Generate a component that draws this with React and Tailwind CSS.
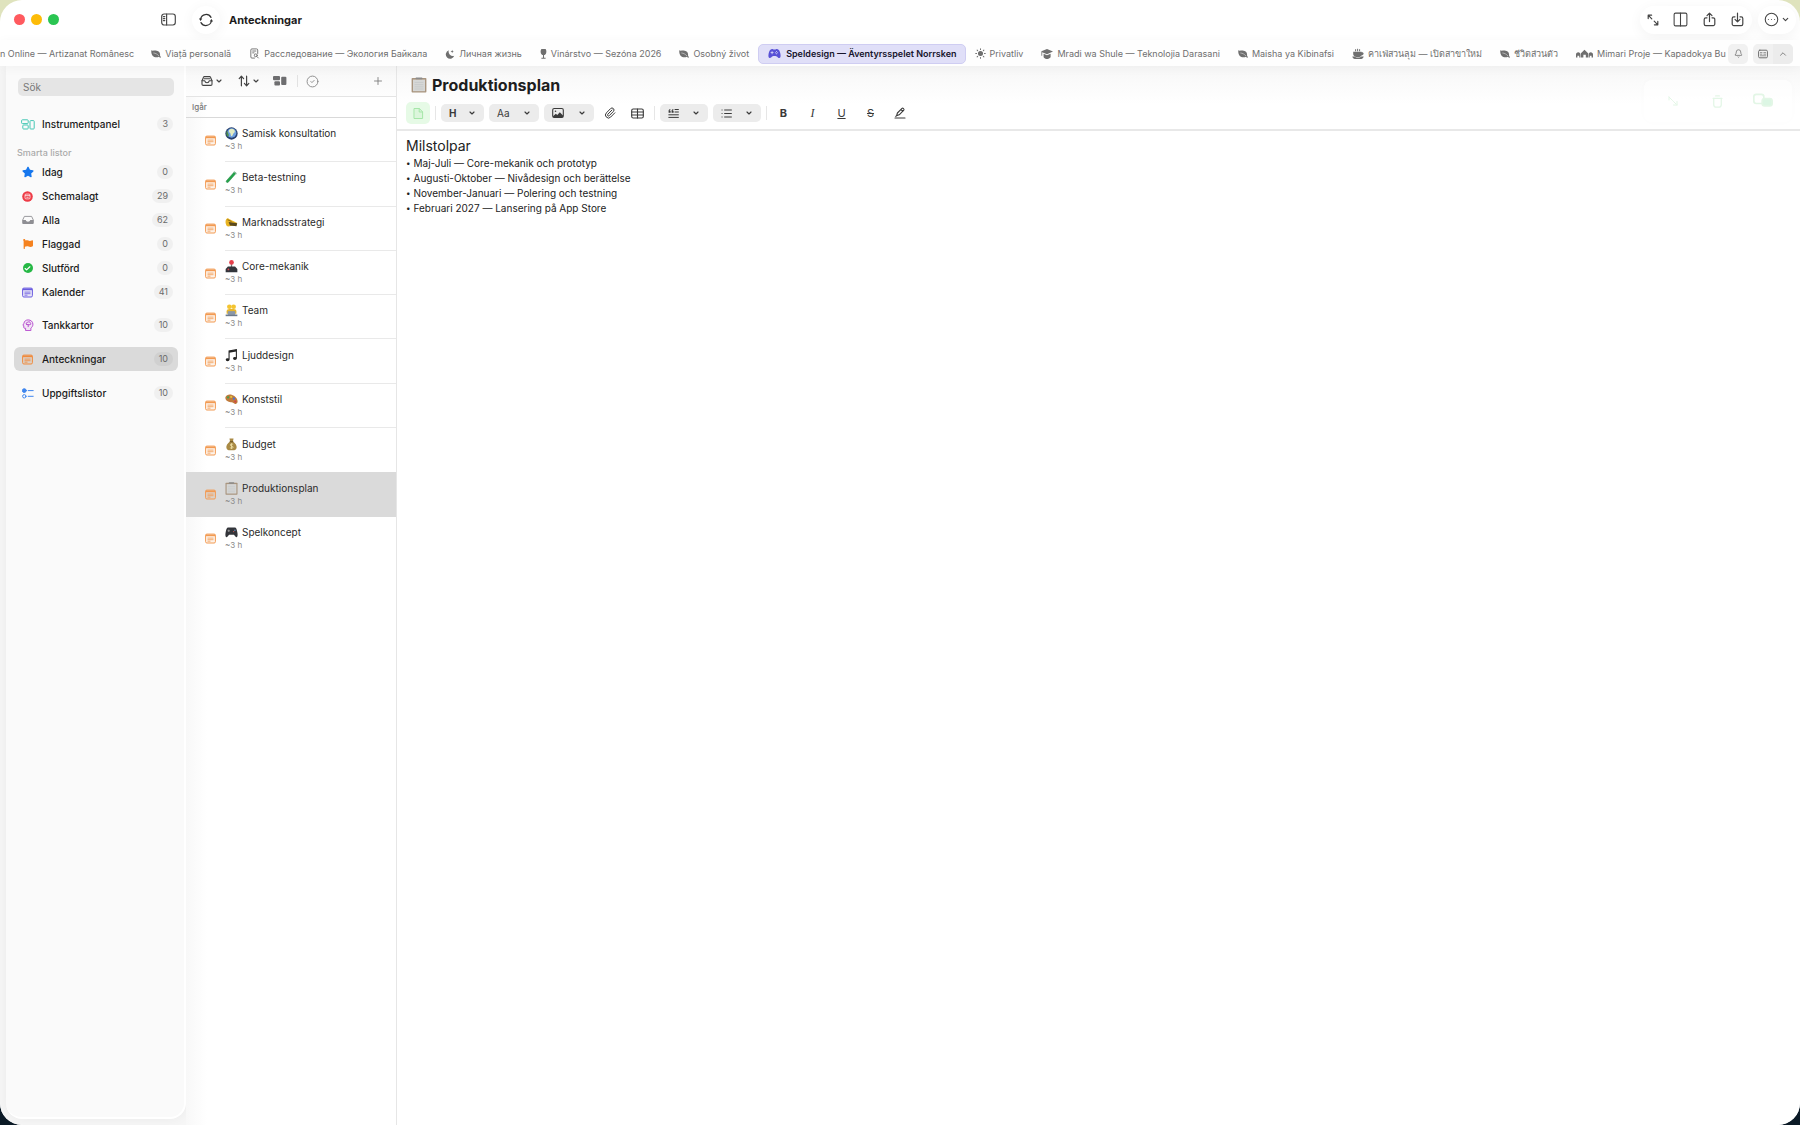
import React from 'react';
import { Bell, Check, ChevronDown, ChevronUp, CircleCheck, CircleEllipsis, Columns2, Paperclip, Plus } from 'lucide-react';
import { FaFlag, FaStar } from 'react-icons/fa';
import { IoGameController } from 'react-icons/io5';

/* ---------- icons ---------- */

const Svg = ({ size = 12, w, children, className = '', ...rest }) => (
  <svg width={w || size} height={size} viewBox="0 0 24 24" fill="none" stroke="currentColor" strokeWidth="2" strokeLinecap="round" strokeLinejoin="round" className={`shrink-0 ${className}`} aria-hidden="true" {...rest}>
    {children}
  </svg>
);

const PanelIcon = () => (
  <Svg size={15} viewBox="0 0 15 15" strokeWidth="1.2">
    <rect x="0.7" y="2" width="13.6" height="11" rx="2.4" />
    <path d="M5.6 2v11M2.4 4.6h1.4M2.4 6.6h1.4M2.4 8.6h1.4" />
  </Svg>
);

const SyncIcon = () => (
  <Svg size={16} viewBox="0 0 16 16" strokeWidth="1.2">
    <path d="M2.6 7A5.6 5.6 0 0 1 13 5.4M13.4 9A5.6 5.6 0 0 1 3 10.6" />
    <path d="M0.9 6.6h3.4L2.6 9zM15.1 9.4h-3.4L13.4 7z" fill="currentColor" stroke="none" />
  </Svg>
);

const ExpandIcon = () => (
  <Svg size={12} viewBox="0 0 12 12" strokeWidth="1.2">
    <path d="M1.2 4.6V1.2h3.4M1.4 1.4l3.4 3.4M10.8 7.4v3.4H7.4M10.6 10.6 7.2 7.2" />
  </Svg>
);

const ShareIcon = () => (
  <Svg size={15} viewBox="0 0 15 15" strokeWidth="1.2">
    <path d="M5 5.8H3.8A1.6 1.6 0 0 0 2.2 7.4V12a1.6 1.6 0 0 0 1.6 1.6h7.4a1.6 1.6 0 0 0 1.6-1.6V7.4a1.6 1.6 0 0 0-1.6-1.6H10M7.5 9.6V1.2M5 3.6l2.5-2.5L10 3.6" />
  </Svg>
);

const SaveIcon = () => (
  <Svg size={15} viewBox="0 0 15 15" strokeWidth="1.2">
    <path d="M5 4.8H3.8a1.6 1.6 0 0 0-1.6 1.6V12a1.6 1.6 0 0 0 1.6 1.6h7.4a1.6 1.6 0 0 0 1.6-1.6V6.4a1.6 1.6 0 0 0-1.6-1.6H10M7.5 1.2v8.6M5 7.4l2.5 2.5L10 7.4" />
  </Svg>
);

const LeafIcon = () => (
  <Svg size={10} viewBox="0 0 11 10" stroke="none" fill="currentColor">
    <path d="M.3 1c1.500.7 3 0 4.900.1 3.600.2 5.200 2.500 4.700 5.600l.9 1.700c.3.600-.5 1.100-.9.600L8.800 7.900C5 9.900-.2 8 .3 1z" />
    <path d="M3 3.900c2.200.2 4 1.300 5.600 3.100" fill="none" stroke="#fff" strokeWidth=".5" />
  </Svg>
);

const DocSearchIcon = () => (
  <Svg size={11} viewBox="0 0 12 12" strokeWidth="1">
    <path d="M9.5 6V2.2A1.2 1.2 0 0 0 8.3 1H3.2A1.2 1.2 0 0 0 2 2.2v7.6A1.2 1.2 0 0 0 3.2 11H6M4 3.3h3.5M4 5.3h1.5" />
    <circle cx="7.4" cy="8" r="1.6" />
    <path d="m8.7 9.4 1.5 1.5" />
  </Svg>
);

const MoonIcon = () => (
  <Svg size={10} viewBox="0 0 12 12" stroke="none" fill="currentColor">
    <path d="M4.6 1.6a5.2 5.2 0 1 0 6.5 6.6A5.2 5.2 0 0 1 4.6 1.6z" />
    <path d="m8.6 1 .5 1.5 1.5.5-1.5.5L8.600 5l-.5-1.500L6.600 3l1.500-.5z" />
  </Svg>
);

const WineIcon = () => (
  <Svg size={12} w={7} viewBox="0 0 8 12" stroke="none" fill="currentColor">
    <path d="M1.6.4h4.8C7.400 2 7.500 3.400 7 5 6.500 6.300 5.700 6.900 4.600 7.100v3.200h1.800v1.200H1.600v-1.200h1.800V7.100C2.300 6.900 1.500 6.300 1 5 .5 3.400.6 2 1.600.4z" />
  </Svg>
);

const SunIcon = () => (
  <Svg size={11} viewBox="0 0 12 12" strokeWidth="1.1">
    <circle cx="6" cy="6" r="2.2" fill="currentColor" />
    <path d="M6 .8v.9M6 10.3v.9M.8 6h.9M10.3 6h.9M2.3 2.3l.6.6M9.1 9.1l.6.6M9.7 2.3l-.6.6M2.9 9.1l-.6.6" />
  </Svg>
);

const CapIcon = () => (
  <Svg size={12} viewBox="0 0 12 12" stroke="none" fill="currentColor">
    <path d="M6 1 12 3.6 6 6.2 1.2 4.2v3.6H.4V3.3z" />
    <path d="M2.6 5.8 6 7.3l3.6-1.5v3.4C8.6 10.4 7.4 11 6 11s-2.6-.6-3.4-1.8z" />
  </Svg>
);

const CafeIcon = () => (
  <Svg size={12} viewBox="0 0 12 12" stroke="none" fill="currentColor">
    <path d="M1.200 3.800h8.400v.4c1.200-.2 2 .4 2 1.400s-.9 1.900-2.200 1.900C9 8.400 8.400 8.800 7.400 9H4C2.200 8.600 1.200 7.400 1.200 6z" />
    <path d="M.3 8.600h2.500c.6.6 1.200.8 2 .8h2.400c.8 0 1.400-.2 2-.8h2.500c-.3 1.600-1.300 2.400-2.500 2.400H2.800C1.600 11 .6 10.200.3 8.600z" />
    <path d="M3.600 1.600v1.300M5.600 1.200v1.700M7.600 1.600v1.300" stroke="currentColor" strokeWidth="1" />
  </Svg>
);

const HousesIcon = () => (
  <Svg size={11} w={17} viewBox="0 0 18 11" stroke="none" fill="currentColor">
    <path fillRule="evenodd" d="M5.2 5.3 9 1.6l3.8 3.7v4.5h-2.4V6.8H7.8v3H5.2z" />
    <path fillRule="evenodd" d="M0 6.6c0-1.4 1-2.4 2.4-2.4s2.3 1 2.3 2.4v3.2H3.4V8H1.5v1.8H0zM13.3 6.6c0-1.4 1-2.4 2.3-2.4S18 5.2 18 6.6v3.2h-1.5V8h-1.9v1.8h-1.3z" />
  </Svg>
);

const NewsIcon = () => (
  <Svg size={10} viewBox="0 0 10 10" strokeWidth="1">
    <rect x=".6" y="1.2" width="8.8" height="7.6" rx="1.2" />
    <path d="M2.4 3.6h1.600M2.400 5.200h1.600M5.800 3.600h1.800M5.800 5.200h1.800M2.400 6.800h5.200" strokeWidth=".7" />
  </Svg>
);

const NoteIcon = ({ color = '#f08a3c', size = 11 }) => (
  <svg width={size} height={size} viewBox="0 0 11 11" className="shrink-0" aria-hidden="true">
    <rect x=".6" y="1.1" width="9.8" height="8.9" rx="1.3" fill={color} fillOpacity=".12" stroke={color} strokeWidth="1" />
    <path d="M.6 1.6h9.8v1.6H.6z" fill={color} />
    <path d="M2.5 5.1h6M2.5 6.7h6M2.5 8.2h3" stroke={color} strokeWidth=".8" />
  </svg>
);

const BoardsIcon = ({ color }) => (
  <svg width="14" height="11" viewBox="0 0 14 11" fill="none" stroke={color} strokeWidth="1" className="shrink-0" aria-hidden="true">
    <rect x=".6" y=".8" width="6.6" height="3.8" rx=".8" />
    <rect x="1.8" y="6" width="5.4" height="4" rx=".8" />
    <rect x="9" y="1.6" width="4.2" height="8.4" rx=".8" />
  </svg>
);

const CalCircleIcon = () => (
  <svg width="11" height="11" viewBox="0 0 11 11" className="shrink-0" aria-hidden="true">
    <circle cx="5.5" cy="5.5" r="5.3" fill="#ee3b46" />
    <rect x="3" y="3.1" width="5" height="4.8" rx="1" fill="none" stroke="#fff" strokeWidth=".7" />
    <path d="M3 4.6h5M4.4 6.3h2.2" stroke="#fff" strokeWidth=".7" />
  </svg>
);

const TrayIcon = () => (
  <svg width="12" height="10" viewBox="0 0 12 10" className="shrink-0" aria-hidden="true">
    <path d="M.6 5.2 2.4 1.4h7.2l1.8 3.8" fill="none" stroke="#8e8e93" strokeWidth=".9" />
    <path d="M.2 5h3.6c.2 1.2 1 1.7 2.2 1.7S8 6.2 8.2 5h3.6v2.8c0 .8-.5 1.3-1.3 1.3h-9C.7 9.1.2 8.6.2 7.8z" fill="#8e8e93" />
  </svg>
);

const DoneIcon = () => (
  <span className="flex size-[10px] items-center justify-center rounded-full bg-[#25b845] text-white">
    <Check size={7} strokeWidth={4} />
  </span>
);

const MindIcon = () => (
  <svg width="12" height="12" viewBox="0 0 12 12" fill="none" stroke="#b84fd0" strokeWidth="1" strokeLinecap="round" className="shrink-0" aria-hidden="true">
    <path d="M3.6 11.2V9.3H2.6c-.6 0-.8-.4-.8-1V6.8L.9 6.2l1-1.8C2.2 2.2 3.9.9 6.2.9c2.7 0 4.7 1.8 4.7 4.3 0 2-1 3-2 3.9v2.1z" fill="#b84fd0" fillOpacity=".12" />
    <path d="M4.2 4.6c0-1 .8-1.5 1.7-1.3.6-.9 2.3-.6 2.3.6.9.4.7 1.8-.3 1.8H6.2v2M6.2 5.6 4.4 5.4" />
  </svg>
);

const TasksIcon = () => (
  <svg width="12" height="11" viewBox="0 0 12 11" fill="none" stroke="#3f86ee" strokeWidth="1" strokeLinecap="round" className="shrink-0" aria-hidden="true">
    <circle cx="2.3" cy="2.6" r="1.9" fill="#3f86ee" />
    <circle cx="2.3" cy="8.3" r="1.7" />
    <path d="M6.2 2.6h5M6.2 8.3h5" />
  </svg>
);

const DocIcon = () => (
  <Svg size={13} viewBox="0 0 13 13" strokeWidth="1">
    <path d="M2.4 1.5h5l3.2 3.4v6.6H2.4z" fill="currentColor" fillOpacity=".15" />
    <path d="M7.2 1.6V5h3.3" />
  </Svg>
);

const PictureIcon = () => (
  <Svg size={12} viewBox="0 0 12 12" strokeWidth="1.1">
    <rect x=".7" y="1.5" width="10.6" height="9" rx="1.5" />
    <circle cx="3.5" cy="4.3" r=".8" fill="currentColor" stroke="none" />
    <path d="M1 9.2 3.8 6.8l1.5 1.3 2.5-2.9L11 8.6v1.6H1z" fill="currentColor" stroke="none" />
  </Svg>
);

const TableIcon = () => (
  <Svg size={13} viewBox="0 0 13 13" strokeWidth="1.1">
    <rect x=".7" y="2" width="11.6" height="9" rx="1.5" />
    <path d="M.7 5h11.6M.7 8h11.6M6.5 2v9" />
  </Svg>
);

const QuoteIcon = () => (
  <Svg size={11} viewBox="0 0 11 11" strokeWidth="1">
    <path d="M7 1.5h3.4M7 4h3.4M.8 6.8h9.6M.8 9.4h9.6" />
    <path d="M.6 4.8V3C.6 1.8 1.2 1.1 2.4.9v.9c-.5.1-.7.4-.7.9h.9v2.1zM3.6 4.8V3c0-1.2.6-1.9 1.8-2.1v.9c-.5.1-.7.4-.7.9h.9v2.1z" fill="currentColor" stroke="none" />
  </Svg>
);

const BulletsIcon = () => (
  <Svg size={11} viewBox="0 0 11 11" strokeWidth="1">
    <path d="M3.6 2h6.8M3.6 5.5h6.8M3.6 9h6.8M1 2h.1M1 5.5h.1M1 9h.1" />
  </Svg>
);

const MarkerIcon = () => (
  <Svg size={12} viewBox="0 0 12 12" strokeWidth="1.1">
    <path d="M2.6 8.6 3.4 6 8 1.4c.8-.8 2.6.8 1.8 1.7L5.2 7.8zM7 2.6l1.8 1.7M1 11h10M2.6 8.6l-.8.8" />
  </Svg>
);

const BoxIcon = () => (
  <Svg size={12} viewBox="0 0 12 12" strokeWidth="1.1">
    <path d="M1 5.8 2.4 2.4c.2-.5.5-.8 1-.8h5.2c.5 0 .8.3 1 .8L11 5.8v3.4c0 .8-.5 1.2-1.2 1.2H2.2C1.5 10.4 1 10 1 9.2z" />
    <path d="M1 5.8h2.8c.2 1.3 1 1.9 2.2 1.9s2-.6 2.2-1.9H11M3 3.8h6" />
  </Svg>
);

const SortIcon = () => (
  <Svg size={12} viewBox="0 0 12 12" strokeWidth="1.2">
    <path d="M3.4 10.8V1.4M1.2 3.6l2.2-2.4 2.2 2.4M8.6 1.2v9.4M6.4 8.4l2.2 2.4 2.2-2.4" />
  </Svg>
);

const BlocksIcon = () => (
  <svg width="14" height="10" viewBox="0 0 14 10" fill="#6e6e70" className="shrink-0" aria-hidden="true">
    <rect width="7" height="4.2" rx="1" />
    <rect x="1.4" y="5.2" width="5.6" height="4.2" rx="1" />
    <rect x="8.2" y=".8" width="5.2" height="8.2" rx="1" />
  </svg>
);

/* ---------- small colour pictures in front of the note titles ---------- */

const pictures = {
  globe: (
    <>
      <circle cx="8" cy="8" r="7.6" fill="#27406f" />
      <circle cx="8.2" cy="7.4" r="5.8" fill="#6fa0e0" />
      <path d="M6 2.8c3-1.6 5.5 0 6 2S10.5 7 10 8.500 8.500 12 7.500 11s0-3-1.500-3.800S4 4 6 2.800z" fill="#e3ecc2" />
      <path d="M2.5 4.5c1 1 .8 2.5 1.8 4S4 13 2.6 11 1.5 6 2.500 4.500z" fill="#4f8f4a" />
    </>
  ),
  tube: (
    <>
      <path d="M13.9 2.6 4 13.8c-1.2 1.2-3.3-.5-2.2-1.9L11.6 1z" fill="#24a34a" stroke="#17803a" strokeWidth=".6" />
      <path d="m10.8.6 3.8 3.2" stroke="#b8cfc0" strokeWidth="1.2" />
    </>
  ),
  horn: (
    <>
      <path d="M1 5C2 2.4 4 2 5 3.600l10 5-1 2.600L4 13C1.500 13 0 8.500 1 5z" fill="#e8b322" />
      <path d="M4.5 7.4 15 9l-.8 3.6L6 11.6z" fill="#5b4a1c" />
      <path d="M3 4.5 8 6.8" stroke="#7b5d12" strokeWidth="1" />
    </>
  ),
  joystick: (
    <>
      <path d="M8 5v6" stroke="#777" strokeWidth="1.6" />
      <circle cx="8" cy="3" r="2.9" fill="#e5404c" />
      <path d="M3.6 8h8.8l2.8 3v4H.8v-4z" fill="#33363c" />
      <circle cx="4.2" cy="11.6" r="1.1" fill="#d94650" />
    </>
  ),
  team: (
    <>
      <circle cx="5.4" cy="3.4" r="2.9" fill="#f4c430" />
      <circle cx="10.6" cy="3.4" r="2.9" fill="#f4c430" />
      <path d="M2 12V9c0-2 1.5-3 3.6-3h4.8c2.1 0 3.6 1 3.6 3v3z" fill="#e9b62a" />
      <path d="M3.4 8.8h9.2v4.6H3.4z" fill="#8b98a8" />
      <path d="M.8 13h14.4v2H.8z" fill="#6c7a8c" />
    </>
  ),
  music: (
    <>
      <path d="M5 12.8V2.4L14 .8v10.6" fill="none" stroke="#222" strokeWidth="1.3" />
      <path d="M5 2.4 14 .8v2.2L5 4.6z" fill="#222" />
      <ellipse cx="3.2" cy="13.2" rx="2.3" ry="1.8" fill="#222" />
      <ellipse cx="12.2" cy="11.6" rx="2.3" ry="1.8" fill="#222" />
    </>
  ),
  palette: (
    <>
      <path d="M.6 5C2 1 8 1 11.5 3.8s5.500 7.200 2.700 9-3.700-1-6.200-1.300S-.6 9.500.6 5z" fill="#c07b3c" />
      <circle cx="3.8" cy="5.4" r="1.4" fill="#4ba04f" />
      <circle cx="7.6" cy="4.8" r="1.3" fill="#e2c23a" />
      <circle cx="11" cy="7" r="1.4" fill="#4a72d8" />
      <circle cx="12.6" cy="10.4" r="1.3" fill="#d33f49" />
    </>
  ),
  money: (
    <>
      <path d="M5.5.6h5L9.800 4.200c3.200 2 5 5.300 4.500 7.800-.4 2-1.600 3-3 3H4.700c-1.400 0-2.600-1-3-3-.5-2.500 1.300-5.800 4.500-7.800z" fill="#a98a45" />
      <path d="M5.8 4.6h4.4" stroke="#5f4a1c" strokeWidth="1.1" />
      <path d="M10 8c-1-1-3.600-.8-3.600.6S10 9.8 10 11.3s-2.800 1.700-4 .5M8 6.600v6.800" fill="none" stroke="#f1e3a8" strokeWidth="1" />
    </>
  ),
  clipboard: (
    <>
      <rect x=".6" y="1" width="14.8" height="14.6" rx=".8" fill="#a9957f" />
      <rect x="2" y="2.6" width="12" height="11.6" fill="#d6d7d6" />
      <rect x="4.6" y=".4" width="6.8" height="1.8" rx=".6" fill="#8b8b8b" />
      <path d="M3.6 5.4h8.8M3.6 7.6h8.8M3.6 9.8h8.8M3.6 12h8.8" stroke="#c3c5c6" strokeWidth=".7" />
    </>
  ),
  gamepad: (
    <>
      <path d="M3.5 1.8h9c1.5 0 2.3 3.500 2.900 7.200.6 4.200-1 6-2.600 4L11 10.800H5L3.200 13c-1.600 2-3.200.2-2.600-4C1.200 5.300 2 1.800 3.500 1.800z" fill="#33353a" />
      <path d="M4.6 4.4v3M3.1 5.9h3" stroke="#aaa" strokeWidth=".9" />
      <circle cx="10.7" cy="6.8" r=".8" fill="#d05a5a" />
      <circle cx="12.2" cy="5.2" r=".8" fill="#6a9ad8" />
    </>
  ),
};

const Picture = ({ name, size = 13 }) => (
  <svg width={size} height={size} viewBox="0 0 16 16" className="shrink-0" aria-hidden="true">{pictures[name]}</svg>
);

/* ---------- data ---------- */

const tabs = [
  { label: 'Viață personală', icon: <LeafIcon /> },
  { label: 'Расследование — Экология Байкала', icon: <DocSearchIcon /> },
  { label: 'Личная жизнь', icon: <MoonIcon /> },
  { label: 'Vinárstvo — Sezóna 2026', icon: <WineIcon /> },
  { label: 'Osobný život', icon: <LeafIcon /> },
  { label: 'Speldesign — Äventyrsspelet Norrsken', icon: <IoGameController size={13} className="text-[#5750d6]" />, active: true },
  { label: 'Privatliv', icon: <SunIcon /> },
  { label: 'Mradi wa Shule — Teknolojia Darasani', icon: <CapIcon /> },
  { label: 'Maisha ya Kibinafsi', icon: <LeafIcon /> },
  { label: 'คาเฟ่สวนลุม — เปิดสาขาใหม่', icon: <CafeIcon /> },
  { label: 'ชีวิตส่วนตัว', icon: <LeafIcon /> },
  { label: 'Mimari Proje — Kapadokya Bu', icon: <HousesIcon /> },
];

const smartLists = [
  { label: 'Idag', count: 0, icon: <FaStar size={12} color="#1677ee" /> },
  { label: 'Schemalagt', count: 29, icon: <CalCircleIcon /> },
  { label: 'Alla', count: 62, icon: <TrayIcon /> },
  { label: 'Flaggad', count: 0, icon: <FaFlag size={10} color="#f5821f" /> },
  { label: 'Slutförd', count: 0, icon: <DoneIcon /> },
  { label: 'Kalender', count: 41, icon: <NoteIcon color="#6a5be0" /> },
];

const notes = [
  { title: 'Samisk konsultation', picture: 'globe' },
  { title: 'Beta-testning', picture: 'tube' },
  { title: 'Marknadsstrategi', picture: 'horn' },
  { title: 'Core-mekanik', picture: 'joystick' },
  { title: 'Team', picture: 'team' },
  { title: 'Ljuddesign', picture: 'music' },
  { title: 'Konststil', picture: 'palette' },
  { title: 'Budget', picture: 'money' },
  { title: 'Produktionsplan', picture: 'clipboard', active: true },
  { title: 'Spelkoncept', picture: 'gamepad' },
];

const milestones = [
  'Maj-Juli — Core-mekanik och prototyp',
  'Augusti-Oktober — Nivådesign och berättelse',
  'November-Januari — Polering och testning',
  'Februari 2027 — Lansering på App Store',
];

/* ---------- parts ---------- */

function TitleBar() {
  return (
    <header className="flex h-10 shrink-0 items-center pr-1 pb-px pl-[14px]">
      <div className="flex w-[147px] items-center gap-[6px]">
        <button aria-label="Stäng" className="size-[11px] rounded-full bg-[#ff5a5f]" />
        <button aria-label="Minimera" className="size-[11px] rounded-full bg-[#fdbc08]" />
        <button aria-label="Zooma" className="size-[11px] rounded-full bg-[#2ac552]" />
      </div>
      <button aria-label="Sidofält" className="text-[#4a4a4a]"><PanelIcon /></button>
      <button aria-label="Synka" className="ml-[16px] flex size-7 items-center justify-center rounded-full bg-white text-[#333] shadow-[0_2px_14px_rgba(0,0,0,0.05)]"><SyncIcon /></button>
      <h1 className="ml-[9px] text-[11px] leading-4 font-bold text-[#1c1c1c]">Anteckningar</h1>
      <div className="ml-auto flex items-center gap-[6px] text-[#444]">
        <div className="flex h-7 items-center gap-[13px] rounded-full bg-white px-[7px] shadow-[0_3px_14px_rgba(0,0,0,0.05)]">
          <button aria-label="Expandera"><ExpandIcon /></button>
          <button aria-label="Kolumner"><Columns2 size={17} strokeWidth={1.5} /></button>
          <button aria-label="Dela"><ShareIcon /></button>
          <button aria-label="Spara"><SaveIcon /></button>
        </div>
        <button aria-label="Mer" className="flex h-7 items-center gap-[2px] rounded-full bg-white px-[6px] shadow-[0_3px_14px_rgba(0,0,0,0.05)]">
          <CircleEllipsis size={15} strokeWidth={1.7} />
          <ChevronDown size={9} strokeWidth={3} />
        </button>
      </div>
    </header>
  );
}

function TabBar() {
  return (
    <nav className="relative z-10 flex h-[26px] shrink-0 items-center bg-[#fefefe] pt-px pr-[7px] text-[9px] text-[#6f6f6f] shadow-[0_2px_12px_rgba(0,0,0,0.04)]">
      <div className="flex min-w-0 flex-1 overflow-hidden">
        <button className="flex h-5 shrink-0 items-center pr-2 whitespace-nowrap">n Online — Artizanat Românesc</button>
        {tabs.map((tab) => (
          <button
            key={tab.label}
            className={`flex h-5 shrink-0 items-center rounded-[5px] pl-[9px] whitespace-nowrap last:pr-0 ${tab.active ? 'gap-[5px] border border-[#cfcdf2] bg-[#e0dff8] pr-2 font-semibold text-[#16142c]' : 'gap-1 pr-[9px]'}`}
          >
            {tab.icon}
            <span>{tab.label}</span>
          </button>
        ))}
      </div>
      <button aria-label="Aviseringar" className="flex size-5 items-center justify-center rounded-[5px] bg-[#f1f1f1]"><Bell size={9} /></button>
      <div className="ml-[5px] flex h-5 w-10 overflow-hidden rounded-[5px] bg-[#f1f1f1]">
        <button aria-label="Lista" className="flex flex-1 items-center justify-center"><NewsIcon /></button>
        <button aria-label="Dölj" className="flex flex-1 items-center justify-center bg-[#ececec]"><ChevronUp size={10} /></button>
      </div>
    </nav>
  );
}

function SidebarRow({ label, count, icon, active }) {
  return (
    <button className={`flex h-6 w-full items-center rounded-[6px] pr-[5px] pl-[6px] ${active ? 'bg-[#dadada]' : ''}`}>
      <span className="flex w-[15px] justify-center">{icon}</span>
      <span className="ml-[7px] text-[10px] font-medium text-[#1a1a1a]">{label}</span>
      <span className={`ml-auto rounded-full px-[5px] text-[9px] leading-[14px] text-[#6b6b6b] ${active ? 'bg-[#d0d0d0]' : 'bg-[#f0f0f0]'}`}>{count}</span>
    </button>
  );
}

function Sidebar() {
  return (
    <aside className="flex w-[186px] shrink-0 flex-col bg-[#f6f6f6] pb-[6px] pl-[6px]">
      <div className="flex-1 rounded-b-[16px] border-r-2 border-b-2 border-white bg-[#fafafa] pt-3 pr-[6px] pl-2 shadow-[0_0_12px_rgba(0,0,0,0.05)]">
        <div className="px-1">
          <input aria-label="Sök" placeholder="Sök" className="block h-[18px] w-full rounded-[5px] bg-[#e5e5e5] px-[5px] text-[10px] outline-none placeholder:text-[#777]" />
        </div>
        <div className="mt-4">
          <SidebarRow label="Instrumentpanel" count={3} icon={<BoardsIcon color="#45c7b4" />} />
        </div>
        <h2 className="mt-[10px] pl-[3px] text-[9px] leading-[14px] font-medium text-[#aaa]">Smarta listor</h2>
        {smartLists.map((row) => <SidebarRow key={row.label} {...row} />)}
        <div className="mt-[9px] flex flex-col gap-[10px]">
          <SidebarRow label="Tankkartor" count={10} icon={<MindIcon />} />
          <SidebarRow label="Anteckningar" count={10} icon={<NoteIcon />} active />
          <SidebarRow label="Uppgiftslistor" count={10} icon={<TasksIcon />} />
        </div>
      </div>
    </aside>
  );
}

function NoteList() {
  return (
    <section className="w-[211px] shrink-0 border-r border-[#e6e6e6] bg-gradient-to-r from-[#f8f8f8] via-white via-10% to-white">
      <div className="flex h-[31px] items-center border-b border-[#e4e4e4] bg-gradient-to-b from-[#f7f7f7] to-[#fdfdfd] pr-3 pl-[15px] text-[#444]">
        <button aria-label="Visa" className="flex items-center gap-[2px]"><BoxIcon /><ChevronDown size={8} strokeWidth={3.5} /></button>
        <button aria-label="Sortera" className="ml-[15px] flex items-center gap-[2px]"><SortIcon /><ChevronDown size={8} strokeWidth={3.5} /></button>
        <button aria-label="Grupper" className="ml-[13px]"><BlocksIcon /></button>
        <span className="ml-[10px] h-3 w-px bg-[#e2e2e2]" />
        <button aria-label="Markera" className="ml-[8px] text-[#888]"><CircleCheck size={13} strokeWidth={1.7} /></button>
        <button aria-label="Ny anteckning" className="ml-auto text-[#777]"><Plus size={12} strokeWidth={1.7} /></button>
      </div>
      <h2 className="h-[21px] border-b border-[#d9d9d9] pl-[6px] text-[8px] leading-5 font-medium text-[#777]">Igår</h2>
      <ul className="grid h-[443px] auto-rows-fr">
        {notes.map((note, i) => (
          <li key={note.title} className={note.active ? 'bg-[#dadada]' : ''}>
            <button className="flex h-full w-full items-center pl-[19px] text-left">
              <NoteIcon color="#f29a52" />
              <span className={`ml-[9px] flex h-full flex-1 flex-col justify-center ${i < 7 ? 'border-b border-[#e9e9e9]' : ''}`}>
                <span className="flex items-center gap-1 text-[10px] leading-[13px] text-[#2a2a2a]">
                  <Picture name={note.picture} />
                  {note.title}
                </span>
                <span className="text-[8px] leading-[12px] text-[#8a8a8a]">~3 h</span>
              </span>
            </button>
          </li>
        ))}
      </ul>
    </section>
  );
}

const MenuButton = ({ label, width, children }) => (
  <button aria-label={label} className={`flex h-[18px] items-center justify-between rounded-[5px] bg-[#ececec] px-2 ${width}`}>
    {children}
    <ChevronDown size={8} strokeWidth={3.5} />
  </button>
);

const ToolButton = ({ label, children }) => (
  <button aria-label={label} className="flex size-[17px] items-center justify-center text-[11px] leading-none">{children}</button>
);

const Divider = () => <span className="mx-[5px] h-[14px] w-px bg-[#e6e6e6]" />;

function Editor() {
  return (
    <main className="relative min-w-0 flex-1 bg-white">
      <div className="flex h-[65px] flex-col border-b-2 border-[#e8e8e8] bg-gradient-to-b from-[#f7f7f7] to-white to-60% pl-[9px]">
        <h2 className="flex h-9 items-center gap-[5px] pt-[2px] pl-[5px] text-[16px] font-bold text-[#1e1e1e]">
          <Picture name="clipboard" size={16} />
          Produktionsplan
        </h2>
        <div className="flex h-[22px] items-center text-[#3a3a3a]">
          <button aria-label="Dokument" className="flex h-[22px] w-6 items-center justify-center rounded-[5px] bg-[#e6fae6] text-[#a5e6a8]"><DocIcon /></button>
          <Divider />
          <div className="flex gap-[5px]">
            <MenuButton label="Rubrik" width="w-[43px]"><b className="text-[10px]">H</b></MenuButton>
            <MenuButton label="Typsnitt" width="w-[50px]"><span className="text-[10px]">Aa</span></MenuButton>
            <MenuButton label="Bild" width="w-[50px]"><PictureIcon /></MenuButton>
          </div>
          <div className="mr-[3px] ml-[7px] flex gap-[11px]">
            <ToolButton label="Bilaga"><Paperclip size={12} strokeWidth={2} /></ToolButton>
            <ToolButton label="Tabell"><TableIcon /></ToolButton>
          </div>
          <Divider />
          <div className="flex gap-[5px]">
            <MenuButton label="Citat" width="w-[48px]"><QuoteIcon /></MenuButton>
            <MenuButton label="Lista" width="w-[48px]"><BulletsIcon /></MenuButton>
          </div>
          <Divider />
          <div className="flex gap-3 pl-[3px]">
            <ToolButton label="Fet"><b>B</b></ToolButton>
            <ToolButton label="Kursiv"><i className="font-['Liberation_Serif'] text-[12px]">I</i></ToolButton>
            <ToolButton label="Understruken"><u>U</u></ToolButton>
            <ToolButton label="Genomstruken"><s>S</s></ToolButton>
            <ToolButton label="Markering"><MarkerIcon /></ToolButton>
          </div>
        </div>
      </div>
      <article className="px-[9px] pt-[6px] text-[#222]">
        <h3 className="mb-px text-[14px] leading-[18px]">Milstolpar</h3>
        <ul className="text-[10px] leading-[15px]">
          {milestones.map((line) => (
            <li key={line} className="flex items-center gap-[3px]">
              <span className="text-[8px]">•</span>
              {line}
            </li>
          ))}
        </ul>
      </article>

      {/* floating shortcuts, nearly faded out */}
      <div className="absolute top-[14px] right-2 grid h-[42px] w-[148px] grid-cols-3 place-items-center rounded-[8px] bg-white/60 px-[6px] text-[#e3f6e6] shadow-[0_0_8px_rgba(0,0,0,0.015)]">
        <Svg size={12}><path d="M4 4l7 7M4 10V4M20 20v-7M20 20h-7M18 18l-5-5" /></Svg>
        <Svg size={15}><path d="M6 7v10a4 4 0 0 0 4 4h4a4 4 0 0 0 4-4V7M5 7h14M9 3h6" /></Svg>
        <Svg size={20} w={22}><rect x="1" y="4" width="12" height="11" rx="3" /><rect x="11" y="9" width="12" height="9" rx="3" fill="#dcf6e4" /></Svg>
      </div>
    </main>
  );
}

export default function App() {
  return (
    <div className="h-screen bg-gradient-to-b from-[#dfe3bd] from-50% to-[#0b1a26] to-50% font-['Inter','Noto_Sans','Noto_Sans_CJK_SC',sans-serif]">
      <div className="flex h-full flex-col overflow-hidden rounded-[22px] bg-white">
        <TitleBar />
        <TabBar />
        <div className="flex min-h-0 flex-1">
          <Sidebar />
          <NoteList />
          <Editor />
        </div>
      </div>
    </div>
  );
}
